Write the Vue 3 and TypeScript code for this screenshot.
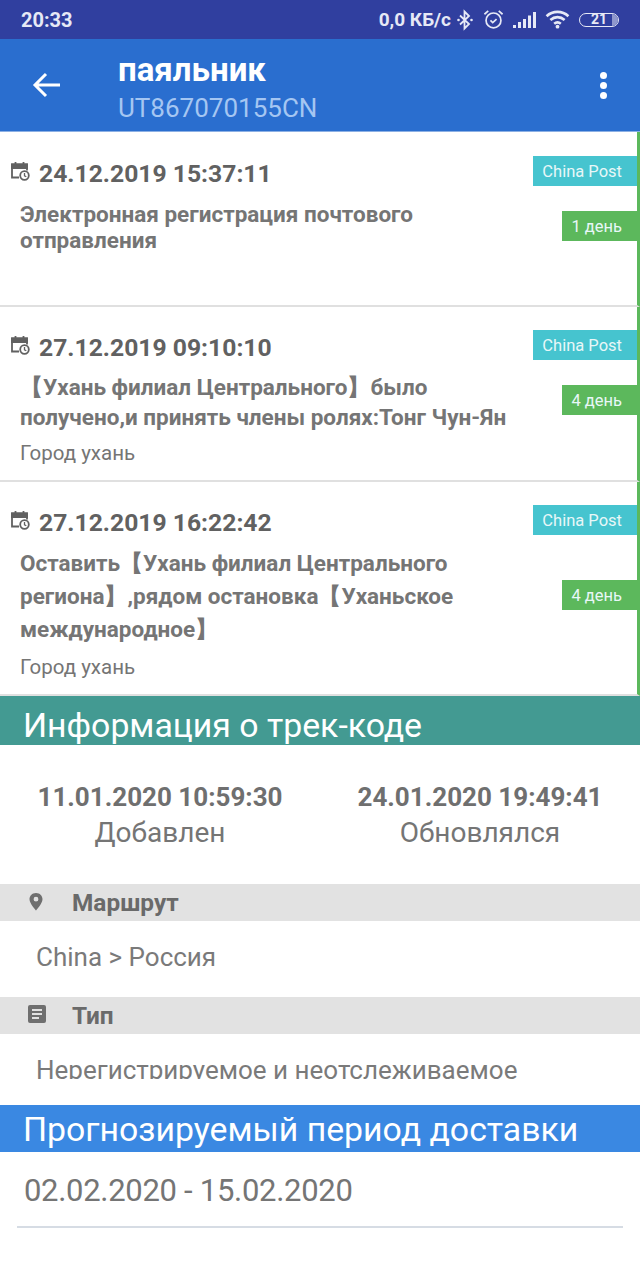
<script setup lang="ts">
type TrackEvent = {
  date: string
  lines: string[]
  city?: string
  days: string
  height: number
  top: number
  textGap: number
  lineHeight: number
  cityGap: number
  badgeGap: number
}

const events: TrackEvent[] = [
  {
    date: '24.12.2019 15:37:11',
    lines: ['Электронная регистрация почтового', 'отправления'],
    days: '1 день',
    height: 175,
    top: 25,
    textGap: 10,
    lineHeight: 26,
    cityGap: 0,
    badgeGap: 25,
  },
  {
    date: '27.12.2019 09:10:10',
    lines: ['【Ухань филиал Центрального】было', 'получено,и принять члены ролях:Тонг Чун-Ян'],
    city: 'Город ухань',
    days: '4 день',
    height: 175,
    top: 24,
    textGap: 7,
    lineHeight: 30,
    cityGap: 7,
    badgeGap: 25,
  },
  {
    date: '27.12.2019 16:22:42',
    lines: ['Оставить【Ухань филиал Центрального', 'региона】,рядом остановка【Уханьское', 'международное】'],
    city: 'Город ухань',
    days: '4 день',
    height: 214,
    top: 24,
    textGap: 6.5,
    lineHeight: 33,
    cityGap: 7,
    badgeGap: 45,
  },
]
</script>

<template>
  <div class="screen">
    <div class="status">
      <span class="status__time">20:33</span>
      <div class="status__right">
        <span class="status__speed">0,0 КБ/с</span>
        <svg class="ic ic--bt" width="16" height="22" viewBox="0 0 16 22" fill="none" stroke="#e6e9f6" stroke-width="1.8">
          <path d="M3 6.5l9 8.5-4.500 4.500V2.500L12 7l-9 8.500" />
          <circle cx="1.500" cy="11" r="1.300" fill="#e6e9f6" stroke="none" />
          <circle cx="14.500" cy="11" r="1.300" fill="#e6e9f6" stroke="none" />
        </svg>
        <svg class="ic ic--alarm" width="21" height="21" viewBox="0 0 22 22" fill="none" stroke="#e6e9f6" stroke-width="1.800">
          <circle cx="11" cy="12" r="7.800" />
          <path d="M7.800 12l2.400 2.300 4-3.600" />
          <path d="M1.500 5.500L5.500 2M20.500 5.500L16.500 2" />
        </svg>
        <svg class="ic ic--signal" width="23" height="16" viewBox="0 0 23 16" fill="#e6e9f6">
          <rect x="0" y="13" width="3" height="3" />
          <rect x="5" y="10" width="3" height="6" />
          <rect x="10" y="7" width="3" height="9" />
          <rect x="15" y="3.500" width="3" height="12.500" />
          <rect x="20" y="0" width="3" height="16" />
        </svg>
        <svg class="ic ic--wifi" width="25" height="19" viewBox="0 0 26 20" fill="none" stroke="#e6e9f6" stroke-width="2.800">
          <path d="M1.500 6.500C8 .5 18 .5 24.500 6.500" />
          <path d="M5.500 10.500c4.500-4 10.500-4 15 0" />
          <path d="M9.500 14.500c2.200-1.800 4.800-1.800 7 0" />
          <circle cx="13" cy="17.500" r="2" fill="#e6e9f6" stroke="none" />
        </svg>
        <div class="battery">
          <span class="battery__val">21</span>
          <span class="battery__tip" />
        </div>
      </div>
    </div>

    <header class="toolbar">
      <svg class="toolbar__back" width="28" height="26" viewBox="0 0 28 26" fill="none" stroke="#fff" stroke-width="3">
        <path d="M28 13H3M14 2L3 13l11 11" />
      </svg>
      <div class="toolbar__titles">
        <div class="toolbar__title">паяльник</div>
        <div class="toolbar__sub">UT867070155CN</div>
      </div>
      <div class="toolbar__more"><i /><i /><i /></div>
    </header>

    <section
      v-for="ev in events"
      :key="ev.date"
      class="event"
      :style="{ height: ev.height + 'px' }"
    >
      <div class="event__main" :style="{ paddingTop: ev.top + 'px' }">
        <div class="event__date">
          <svg width="20" height="20" viewBox="0 0 20 20" fill="none" stroke="#616161" stroke-width="1.800">
            <path d="M9 16.500H2V3.500h15v6" />
            <path d="M2 3.500h15v3.500H2z" fill="#616161" />
            <path d="M5.500 1v3M13.500 1v3" />
            <circle cx="14.500" cy="14.500" r="4.300" fill="#fff" />
            <path d="M14.500 12v2.800l1.800 1" stroke-width="1.300" />
          </svg>
          <span>{{ ev.date }}</span>
        </div>
        <div
          class="event__text"
          :style="{ lineHeight: ev.lineHeight + 'px', marginTop: ev.textGap + 'px' }"
        >
          <div v-for="line in ev.lines" :key="line">{{ line }}</div>
        </div>
        <div v-if="ev.city" class="event__city" :style="{ marginTop: ev.cityGap + 'px' }">{{ ev.city }}</div>
      </div>
      <div class="event__side">
        <span class="badge badge--carrier">China Post</span>
        <span class="badge badge--days" :style="{ marginTop: ev.badgeGap + 'px' }">{{ ev.days }}</span>
      </div>
    </section>

    <h2 class="band band--teal">Информация о трек-коде</h2>
    <div class="stamps">
      <div class="stamp">
        <div class="stamp__date">11.01.2020 10:59:30</div>
        <div class="stamp__label">Добавлен</div>
      </div>
      <div class="stamp">
        <div class="stamp__date">24.01.2020 19:49:41</div>
        <div class="stamp__label">Обновлялся</div>
      </div>
    </div>

    <div class="row-head">
      <svg width="16" height="20" viewBox="0 0 16 20" fill="#6f6f6f">
        <path d="M8 1C4 1 1.500 4 1.500 7.300 1.500 11.500 8 18.500 8 18.500s6.500-7 6.500-11.200C14.500 4 12 1 8 1zm0 8.600a2.400 2.400 0 1 1 0-4.800 2.400 2.400 0 0 1 0 4.800z" />
      </svg>
      <span>Маршрут</span>
    </div>
    <div class="row-value">China &gt; Россия</div>

    <div class="row-head">
      <svg width="18" height="18" viewBox="0 0 18 18" fill="#6f6f6f">
        <path d="M2 0h14a2 2 0 0 1 2 2v14a2 2 0 0 1-2 2H2a2 2 0 0 1-2-2V2a2 2 0 0 1 2-2zm2 4v2h10V4H4zm0 4v2h10V8H4zm0 4v2h7v-2H4z" />
      </svg>
      <span>Тип</span>
    </div>
    <div class="row-value row-value--clip">Нерегистрируемое и неотслеживаемое</div>

    <h2 class="band band--blue">Прогнозируемый период доставки</h2>
    <div class="forecast">
      <div class="forecast__val">02.02.2020 - 15.02.2020</div>
    </div>
  </div>
</template>

<style>
html,
body {
  margin: 0;
  background: #fff;
}
</style>

<style scoped>
.screen {
  width: 640px;
  height: 1280px;
  overflow: hidden;
  background: #fff;
  font-family: Roboto, "Noto Sans", sans-serif;
  color: #6f6f6f;
}

.status {
  height: 39px;
  box-sizing: border-box;
  padding: 0 21px;
  display: flex;
  align-items: center;
  justify-content: space-between;
  background: #303f9f;
  color: #e6e9f6;
}

.status__time {
  font-size: 20px;
  font-weight: 700;
}

.status__right {
  display: flex;
  align-items: center;
}

.status__speed {
  font-size: 19px;
  font-weight: 700;
}

.ic {
  display: block;
}

.ic--bt {
  margin-left: 6px;
}

.ic--alarm {
  margin-left: 10px;
}

.ic--signal {
  margin-left: 9px;
}

.ic--wifi {
  margin-left: 9px;
}

.battery {
  position: relative;
  width: 40px;
  height: 14px;
  box-sizing: border-box;
  margin-left: 9px;
  border: 1.500px solid #e6e9f6;
  border-radius: 8px;
  display: flex;
  justify-content: center;
  align-items: center;
  overflow: hidden;
}

.battery__val {
  font-size: 14px;
  font-weight: 700;
  line-height: 11px;
}

.battery__tip {
  position: absolute;
  right: 0;
  top: 0;
  bottom: 0;
  width: 6px;
  background: #8f98cd;
}

.toolbar {
  height: 93px;
  box-sizing: border-box;
  display: flex;
  align-items: center;
  background: #2a6ecf;
  border-bottom: 1px solid #8cb0e4;
}

.toolbar__back {
  margin-left: 32px;
  flex: none;
}

.toolbar__titles {
  margin-left: 58px;
  flex: 1;
  align-self: flex-start;
  padding-top: 12px;
}

.toolbar__title {
  font-size: 33px;
  font-weight: 700;
  line-height: 38px;
  color: #fff;
}

.toolbar__sub {
  font-size: 26px;
  line-height: 38px;
  color: #a5c6f2;
}

.toolbar__more {
  display: flex;
  flex-direction: column;
  gap: 3px;
  margin-right: 33px;
}

.toolbar__more i {
  display: block;
  width: 7px;
  height: 7px;
  border-radius: 50%;
  background: #fff;
}

.event {
  box-sizing: border-box;
  display: flex;
  justify-content: space-between;
  border-right: 3px solid #5cb85c;
  border-bottom: 2px solid #e0e0e0;
}

.event__main {
  padding-left: 10px;
}

.event__date {
  display: flex;
  align-items: center;
  gap: 9px;
  font-size: 24.700px;
  font-weight: 700;
  line-height: 34px;
  color: #616161;
}

.event__date svg {
  margin-top: -6px;
}

.event__text {
  margin-left: 10px;
  font-size: 22.500px;
  font-weight: 700;
  color: #757575;
}

.event__city {
  margin-left: 10px;
  font-size: 20.500px;
  line-height: 28px;
  color: #757575;
}

.event__side {
  display: flex;
  flex-direction: column;
  align-items: flex-end;
  padding-top: 23px;
}

.event:first-of-type .event__side {
  padding-top: 24px;
}

.badge {
  height: 30px;
  box-sizing: border-box;
  padding: 0 15px 0 9px;
  display: flex;
  align-items: center;
  font-size: 16.500px;
  color: #e8f7f8;
}

.badge--carrier {
  background: #46c4cf;
}

.badge--days {
  background: #5cb85c;
}

.band {
  margin: 0;
  font-size: 33.800px;
  font-weight: 400;
  color: #fff;
  padding-left: 23px;
  overflow: hidden;
  white-space: nowrap;
}

.band--teal {
  height: 49px;
  line-height: 59px;
  background: #439a92;
}

.band--blue {
  height: 47px;
  line-height: 50px;
  background: #3a88e2;
}

.stamps {
  height: 139px;
  display: grid;
  grid-template-columns: 320px 320px;
  padding-top: 34px;
  box-sizing: border-box;
  text-align: center;
}

.stamp__date {
  font-size: 26px;
  font-weight: 700;
  line-height: 36px;
}

.stamp__label {
  font-size: 28px;
  line-height: 36px;
  color: #757575;
}

.row-head {
  height: 37px;
  display: flex;
  align-items: center;
  background: #e2e2e2;
  font-size: 24.400px;
  font-weight: 700;
  color: #6a6a6a;
  position: relative;
  padding-left: 72px;
}

.row-head svg {
  position: absolute;
  left: 28px;
  top: 8px;
}

.row-value {
  height: 76px;
  box-sizing: border-box;
  padding: 18px 0 0 36px;
  font-size: 26px;
  line-height: 36px;
  color: #7a7a7a;
}

.row-value--clip {
  height: 45px;
  margin-bottom: 26px;
  overflow: hidden;
}

.forecast {
  margin: 0 17px;
  height: 74px;
  border-bottom: 2px solid #d6dce4;
}

.forecast__val {
  margin-left: 7px;
  font-size: 31px;
  letter-spacing: -0.3px;
  line-height: 78px;
  color: #757575;
}
</style>
